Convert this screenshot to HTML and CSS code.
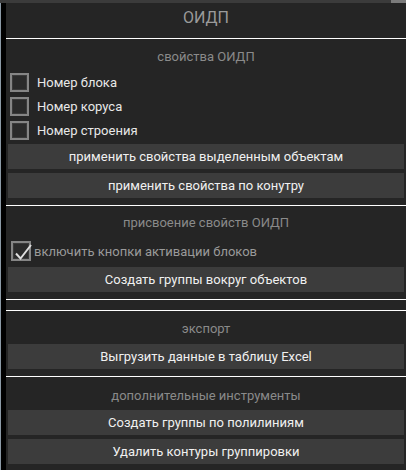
FILE: index.html
```
<!DOCTYPE html>
<html lang="ru">
<head>
<meta charset="utf-8">
<title>ОИДП</title>
<link rel="stylesheet" href="styles.css">
</head>
<body>
<div class="window">
  <div class="topbar"><div class="topbar-fill"></div><div class="topbar-knob"></div></div>
  <div class="main">
    <div class="edge"></div>
    <div class="panel">
      <div class="header">ОИДП</div>
      <div class="sep"></div>

      <div class="label l1">свойства ОИДП</div>
      <div class="checks">
        <div class="check"><span class="box"></span><span class="ctext">Номер блока</span></div>
        <div class="check"><span class="box"></span><span class="ctext">Номер коруса</span></div>
        <div class="check"><span class="box"></span><span class="ctext">Номер строения</span></div>
      </div>
      <div class="btn b1">применить свойства выделенным объектам</div>
      <div class="btn b2">применить свойства по конутру</div>
      <div class="sep s2"></div>

      <div class="label l2">присвоение свойств ОИДП</div>
      <div class="check checked">
        <span class="box boxc"><svg class="tick" viewBox="0 0 20 20" width="20" height="20"><path d="M4 11.5 L8.5 16.5 L19 3" fill="none" stroke="#dedede" stroke-width="2"/></svg></span>
        <span class="ctext dim">включить кнопки активации блоков</span>
      </div>
      <div class="btn b3">Создать группы вокруг объектов</div>
      <div class="sep s3"></div>
      <div class="sep s4"></div>

      <div class="label l3">экспорт</div>
      <div class="btn b4">Выгрузить данные в таблицу Excel</div>
      <div class="sep s5"></div>

      <div class="label l4">дополнительные инструменты</div>
      <div class="btn b5">Создать группы по полилиниям</div>
      <div class="btn b6">Удалить контуры группировки</div>
    </div>
  </div>
</div>
</body>
</html>
```
FILE: styles.css
```
html, body {
  margin: 0;
  padding: 0;
  background: #252525;
}
body {
  width: 406px;
  height: 470px;
  overflow: hidden;
  font-family: Roboto, "Noto Sans", sans-serif;
}
.window {
  display: flex;
  flex-direction: column;
  height: 470px;
}
.topbar {
  display: flex;
  height: 3px;
  flex: 0 0 3px;
}
.topbar-fill {
  flex: 1;
  background: #3b3b3b;
}
.topbar-knob {
  width: 15px;
  background: #7b7b7b;
}
.main {
  flex: 1;
  display: flex;
}
.edge {
  width: 5px;
  background: #000;
  border-left: 1px solid #8c9aa6;
}
.panel {
  flex: 1;
  background: #252525;
  display: flex;
  flex-direction: column;
}
.header {
  height: 35px;
  line-height: 30px;
  text-align: center;
  font-size: 16px;
  color: #9a9a9a;
}
.sep {
  height: 1px;
  background: #ffffff;
}
.label {
  height: 20px;
  line-height: 20px;
  text-align: center;
  font-size: 13px;
  color: #8a8a8a;
}
.l1 { margin-top: 8px; }
.l2 { margin-top: 7px; }
.l3 { margin-top: 8px; }
.l4 { margin-top: 9px; }
.checks {
  margin-top: 3px;
  display: flex;
  flex-direction: column;
}
.check {
  height: 24px;
  display: flex;
  align-items: center;
  padding-left: 4px;
}
.box {
  box-sizing: border-box;
  width: 19px;
  height: 19px;
  border: 2px solid #858585;
  background: #2a2a2a;
  box-shadow: inset 0 0 0 1px #3a3a3a;
  position: relative;
}
.ctext {
  margin-left: 8px;
  font-size: 13px;
  color: #e8e8e8;
}
.checked {
  margin-top: 6px;
  padding-left: 5px;
}
.boxc {
  width: 20px;
  height: 20px;
}
.tick {
  position: absolute;
  left: -1px;
  top: -1px;
}
.ctext.dim {
  margin-left: 3px;
  color: #9a9a9a;
}
.btn {
  margin-left: 2px;
  margin-right: 2px;
  height: 25px;
  line-height: 25px;
  background: #3c3c3c;
  color: #f0f0f0;
  font-size: 13px;
  text-align: center;
}
.b1 { margin-top: 2px; }
.b2 { margin-top: 4px; }
.s2 { margin-top: 7px; }
.b3 { margin-top: 4px; }
.s3 { margin-top: 7px; }
.s4 { margin-top: 10px; }
.b4 { margin-top: 5px; }
.s5 { margin-top: 7px; }
.b5 { margin-top: 4px; }
.b6 { margin-top: 4px; }
```
